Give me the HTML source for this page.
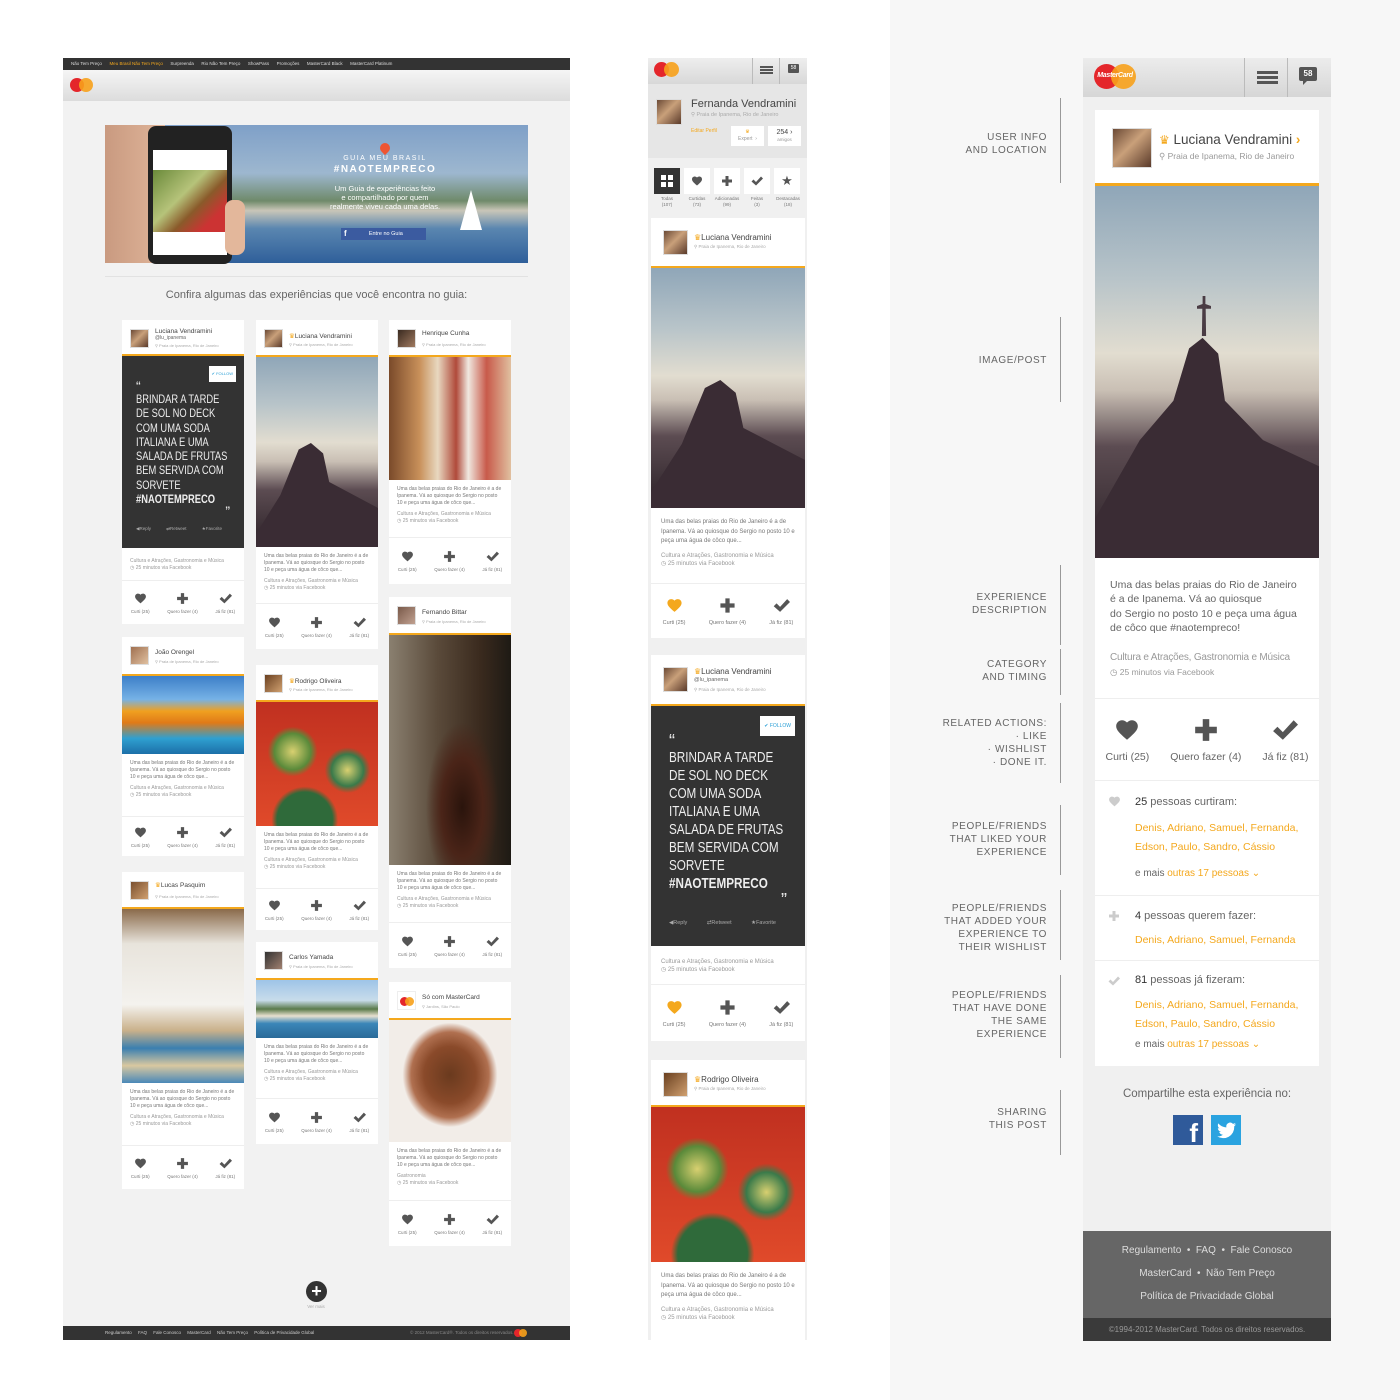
<!DOCTYPE html>
<html><head><meta charset="utf-8">
<style>
*{margin:0;padding:0;box-sizing:border-box}
body{width:1400px;height:1400px;position:relative;background:#fff;font-family:"Liberation Sans",sans-serif;overflow:hidden;color:#555}
.a{position:absolute}
.card{position:absolute;background:#fff;display:flex;flex-direction:column;overflow:hidden}
.ol{background:#f4a81d;flex:none}
.av{position:absolute;background:linear-gradient(135deg,#6b4a36,#c9a07a 45%,#5a3a2a);border:1px solid #ddd}
.nm{position:absolute;color:#444;white-space:nowrap}
.lc{position:absolute;color:#aaa;white-space:nowrap}
.crown{color:#f4a81d}
.txt{color:#777;flex:none;position:relative;overflow:hidden}
.act{flex:none;border-top:1px solid #eee;display:flex;justify-content:space-around;align-items:center;text-align:center;color:#777}
.act div{display:flex;flex-direction:column;align-items:center}
.quote{background:#333;color:#eee;flex:none;position:relative;text-transform:uppercase}
.qi{width:128%;transform:scaleX(.78);transform-origin:left top}
.lbl{position:absolute;text-align:right;color:#666;font-size:10px;letter-spacing:.6px;line-height:13px;white-space:nowrap}
.vl{position:absolute;width:1px;background:#999;left:1060px}
.or{color:#f4a81d}
.christ{background:linear-gradient(#8fa6b8 0%,#b8c4c9 25%,#e2ddd0 45%,#c9bfb4 55%,#5c4c52 70%,#2a2026 100%);position:relative}
</style></head><body>
<svg width="0" height="0" style="position:absolute">
<defs>
<symbol id="h" viewBox="0 0 24 24"><path d="M12 21l-1.5-1.3C5.4 15.1 2 12.1 2 8.4 2 5.4 4.4 3 7.4 3c1.7 0 3.4.8 4.6 2.1C13.2 3.8 14.9 3 16.6 3 19.6 3 22 5.4 22 8.4c0 3.7-3.4 6.7-8.5 11.3z"/></symbol>
<symbol id="p" viewBox="0 0 24 24"><path d="M9 2h6v7h7v6h-7v7H9v-7H2V9h7z"/></symbol>
<symbol id="c" viewBox="0 0 24 24"><path d="M1 13l4-4 5 5L20 3l4 4-14 14z"/></symbol>
</defs></svg>

<div class="a" style="left:890px;top:0;width:510px;height:1400px;background:#f7f7f7"></div>

<!-- ================= DESKTOP ================= -->
<div class="a" style="left:63px;top:58px;width:507px;height:1282px;background:#f2f2f2"></div>
<div class="a" style="left:63px;top:58px;width:507px;height:12px;background:#333;font-size:4.5px;color:#ddd;line-height:12px;padding-left:8px;white-space:nowrap">Não Tem Preço &nbsp;&nbsp;&nbsp;&nbsp; <span class="or">Meu Brasil Não Tem Preço</span> &nbsp;&nbsp;&nbsp;&nbsp; Surpreenda &nbsp;&nbsp;&nbsp;&nbsp; Rio Não Tem Preço &nbsp;&nbsp;&nbsp;&nbsp; ShowPass &nbsp;&nbsp;&nbsp;&nbsp; Promoções &nbsp;&nbsp;&nbsp;&nbsp; MasterCard Black &nbsp;&nbsp;&nbsp;&nbsp; MasterCard Platinum</div>
<div class="a" style="left:63px;top:70px;width:507px;height:31px;background:linear-gradient(#f5f5f5,#dcdcdc)"></div>
<div class="a" style="left:70px;top:78px;width:14px;height:14px;border-radius:50%;background:#e4262b"></div>
<div class="a" style="left:79px;top:78px;width:14px;height:14px;border-radius:50%;background:#f7a11b;opacity:.9"></div>
<!-- banner -->
<div class="a" style="left:105px;top:125px;width:423px;height:138px;background:linear-gradient(#7fa0c8 0%,#9db7cf 35%,#6f8a6a 55%,#c9c6b8 62%,#5a86b0 75%,#2f5f9a 100%)"></div>
<div class="a" style="left:105px;top:125px;width:60px;height:138px;background:linear-gradient(90deg,#c99a80,#e0b59a)"></div>
<div class="a" style="left:148px;top:126px;width:84px;height:138px;background:#222;border-radius:8px"></div>
<div class="a" style="left:153px;top:150px;width:74px;height:105px;background:#fff"></div>
<div class="a" style="left:153px;top:170px;width:74px;height:62px;background:linear-gradient(135deg,#6a8a3a,#b6c37a 40%,#8a5a2a 60%,#c33 80%)"></div>
<div class="a" style="left:225px;top:200px;width:20px;height:55px;background:#e3b79b;border-radius:8px"></div>
<div class="a" style="left:380px;top:143px;width:10px;height:10px;background:#e53;border-radius:50% 50% 0 50%;transform:rotate(45deg)"></div>
<div class="a" style="left:300px;top:155px;width:170px;text-align:center;color:#fff;font-size:7px;letter-spacing:1.5px">GUIA MEU BRASIL</div>
<div class="a" style="left:300px;top:164px;width:170px;text-align:center;color:#fff;font-size:10px;font-weight:bold;letter-spacing:1.5px">#NAOTEMPRECO</div>
<div class="a" style="left:300px;top:184px;width:170px;text-align:center;color:#fff;font-size:7.5px;line-height:9px">Um Guia de experiências feito<br>e compartilhado por quem<br>realmente viveu cada uma delas.</div>
<div class="a" style="left:341px;top:228px;width:85px;height:12px;background:#3b5ba0;color:#fff;font-size:5.5px;line-height:12px;text-align:center">&nbsp;&nbsp;&nbsp;Entre no Guia</div>
<div class="a" style="left:344px;top:228px;color:#fff;font-size:8px;font-weight:bold;line-height:12px">f</div>
<div class="a" style="left:460px;top:190px;width:22px;height:40px;background:#fff;clip-path:polygon(50% 0,100% 100%,0 100%)"></div>
<div class="a" style="left:105px;top:276px;width:423px;height:1px;background:#e2e2e2"></div>
<div class="a" style="left:63px;top:289px;width:507px;text-align:center;font-size:11px;color:#666">Confira algumas das experiências que você encontra no guia:</div>

<style>
.dc{width:122px}
.dc .hd{height:34px;position:relative;flex:none}
.dc .av{left:8px;top:9px;width:19px;height:19px}
.dc .nm{left:33px;top:9px;font-size:6.5px}
.dc .lc{left:33px;top:22px;font-size:4px}
.dc .ol{height:2px}
.dc .txt{font-size:5px;line-height:7px;padding:6px 8px}
.dc .txt .g{color:#999;margin-top:4px}
.dc .act{font-size:4.5px}
.dc .act svg{width:13px;height:13px;fill:#555;margin-bottom:4px}
</style>

<div class="card dc" style="left:122px;top:320px">
<div class="hd"><div class="av"></div><div class="nm" style="top:8px">Luciana Vendramini</div><div class="lc" style="top:15px;font-size:5px;color:#666">@lu_ipanema</div><div class="lc" style="top:23px">⚲ Praia de Ipanema, Rio de Janeiro</div></div>
<div class="ol"></div>
<div class="quote" style="height:192px;padding:20px 14px;font-size:12px;line-height:14.3px">
<div class="a" style="right:8px;top:10px;background:#fff;color:#2a9fd6;font-size:4px;padding:1px 3px">✔ Follow</div>
<div style="font-size:14px;line-height:12px;margin-top:4px">“</div><div class="qi">BRINDAR A TARDE<br>DE SOL NO DECK<br>COM UMA SODA<br>ITALIANA E UMA<br>SALADA DE FRUTAS<br>BEM SERVIDA COM<br>SORVETE<br><b>#NAOTEMPRECO</b></div><div style="text-align:right;font-size:14px;line-height:10px">”</div>
<div class="a" style="left:14px;bottom:12px;font-size:4.5px;color:#aaa;text-transform:none;word-spacing:14px">◀Reply ⇄Retweet ★Favorite</div>
</div>
<div class="txt" style="height:32px;padding-top:10px"><div class="g" style="margin:0">Cultura e Atrações, Gastronomia e Música<br>◷ 25 minutos via Facebook</div></div>
<div class="act" style="height:44px"><div><svg><use href="#h"/></svg>Curti (25)</div><div><svg><use href="#p"/></svg>Quero fazer (4)</div><div><svg><use href="#c"/></svg>Já fiz (81)</div></div>
</div>

<div class="card dc" style="left:122px;top:637px">
<div class="hd" style="height:37px"><div class="av" style="background:linear-gradient(135deg,#a07050,#e0c0a0)"></div><div class="nm" style="top:12px">João Orengel</div><div class="lc">⚲ Praia de Ipanema, Rio de Janeiro</div></div>
<div class="ol"></div>
<div style="height:78px;flex:none;background:linear-gradient(#3d7fc8 0%,#76b2e6 30%,#f0a020 45%,#e07a18 60%,#2fa0d0 80%,#1c6fa8 100%)"></div>
<div class="txt" style="height:62px">Uma das belas praias do Rio de Janeiro é a de Ipanema. Vá ao quiosque do Sergio no posto 10 e peça uma água de côco que...<div class="g">Cultura e Atrações, Gastronomia e Música<br>◷ 25 minutos via Facebook</div></div>
<div class="act" style="height:40px"><div><svg><use href="#h"/></svg>Curti (25)</div><div><svg><use href="#p"/></svg>Quero fazer (4)</div><div><svg><use href="#c"/></svg>Já fiz (81)</div></div>
</div>

<div class="card dc" style="left:122px;top:872px">
<div class="hd" style="height:35px"><div class="av" style="background:linear-gradient(135deg,#7a5030,#d0a070)"></div><div class="nm"><span class="crown">♛</span>Lucas Pasquim</div><div class="lc">⚲ Praia de Ipanema, Rio de Janeiro</div></div>
<div class="ol"></div>
<div style="height:174px;flex:none;background:linear-gradient(#8a6a4a 0%,#e8e4dc 20%,#f4f2ee 55%,#c9b08a 70%,#3a7fb0 80%,#d9c8a0 90%,#4a88b8 100%)"></div>
<div class="txt" style="height:62px">Uma das belas praias do Rio de Janeiro é a de Ipanema. Vá ao quiosque do Sergio no posto 10 e peça uma água de côco que...<div class="g">Cultura e Atrações, Gastronomia e Música<br>◷ 25 minutos via Facebook</div></div>
<div class="act" style="height:44px"><div><svg><use href="#h"/></svg>Curti (25)</div><div><svg><use href="#p"/></svg>Quero fazer (4)</div><div><svg><use href="#c"/></svg>Já fiz (81)</div></div>
</div>

<div class="card dc" style="left:256px;top:320px">
<div class="hd" style="height:35px"><div class="av"></div><div class="nm" style="top:12px"><span class="crown">♛</span>Luciana Vendramini</div><div class="lc">⚲ Praia de Ipanema, Rio de Janeiro</div></div>
<div class="ol"></div>
<div class="christ" style="height:190px;flex:none"><div class="a" style="left:0;top:60px;width:122px;height:130px;background:#3a2c34;clip-path:polygon(35% 25%,45% 20%,55% 28%,60% 50%,80% 60%,100% 70%,100% 100%,0 100%,0 90%,20% 60%)"></div></div>
<div class="txt" style="height:56px">Uma das belas praias do Rio de Janeiro é a de Ipanema. Vá ao quiosque do Sergio no posto 10 e peça uma água de côco que...<div class="g">Cultura e Atrações, Gastronomia e Música<br>◷ 25 minutos via Facebook</div></div>
<div class="act" style="height:46px"><div><svg><use href="#h"/></svg>Curti (25)</div><div><svg><use href="#p"/></svg>Quero fazer (4)</div><div><svg><use href="#c"/></svg>Já fiz (81)</div></div>
</div>

<div class="card dc" style="left:256px;top:665px">
<div class="hd" style="height:35px"><div class="av" style="background:linear-gradient(135deg,#6a4020,#d0a070)"></div><div class="nm" style="top:12px"><span class="crown">♛</span>Rodrigo Oliveira</div><div class="lc">⚲ Praia de Ipanema, Rio de Janeiro</div></div>
<div class="ol"></div>
<div style="height:124px;flex:none;background:radial-gradient(circle at 30% 40%,#d8d070 0,#5a8a3a 16%,transparent 22%),radial-gradient(circle at 75% 55%,#d8d070 0,#3a7a4a 14%,transparent 20%),radial-gradient(circle at 40% 95%,#2f6a3a 0,#2f6a3a 20%,transparent 24%),linear-gradient(#c03020,#e04a2a)"></div>
<div class="txt" style="height:62px">Uma das belas praias do Rio de Janeiro é a de Ipanema. Vá ao quiosque do Sergio no posto 10 e peça uma água de côco que...<div class="g">Cultura e Atrações, Gastronomia e Música<br>◷ 25 minutos via Facebook</div></div>
<div class="act" style="height:42px"><div><svg><use href="#h"/></svg>Curti (25)</div><div><svg><use href="#p"/></svg>Quero fazer (4)</div><div><svg><use href="#c"/></svg>Já fiz (81)</div></div>
</div>

<div class="card dc" style="left:256px;top:942px">
<div class="hd" style="height:36px"><div class="av" style="background:linear-gradient(135deg,#333,#a08070)"></div><div class="nm" style="top:12px">Carlos Yamada</div><div class="lc">⚲ Praia de Ipanema, Rio de Janeiro</div></div>
<div class="ol"></div>
<div style="height:58px;flex:none;background:linear-gradient(#9ec4e8 0%,#c8dcea 35%,#5a7a4a 50%,#e8e0d0 62%,#3a86b8 75%,#2a6a98 100%)"></div>
<div class="txt" style="height:60px">Uma das belas praias do Rio de Janeiro é a de Ipanema. Vá ao quiosque do Sergio no posto 10 e peça uma água de côco que...<div class="g">Cultura e Atrações, Gastronomia e Música<br>◷ 25 minutos via Facebook</div></div>
<div class="act" style="height:46px"><div><svg><use href="#h"/></svg>Curti (25)</div><div><svg><use href="#p"/></svg>Quero fazer (4)</div><div><svg><use href="#c"/></svg>Já fiz (81)</div></div>
</div>

<div class="card dc" style="left:389px;top:320px">
<div class="hd" style="height:35px"><div class="av" style="background:linear-gradient(135deg,#3a2a20,#a07a60)"></div><div class="nm" style="top:10px">Henrique Cunha</div><div class="lc">⚲ Praia de Ipanema, Rio de Janeiro</div></div>
<div class="ol"></div>
<div style="height:123px;flex:none;background:linear-gradient(90deg,#7a4a2a 0%,#c8905a 25%,#e8d8c0 40%,#b04a3a 55%,#f0e8e0 65%,#c85a4a 80%,#e0c0a0 100%)"></div>
<div class="txt" style="height:57px">Uma das belas praias do Rio de Janeiro é a de Ipanema. Vá ao quiosque do Sergio no posto 10 e peça uma água de côco que...<div class="g">Cultura e Atrações, Gastronomia e Música<br>◷ 25 minutos via Facebook</div></div>
<div class="act" style="height:47px"><div><svg><use href="#h"/></svg>Curti (25)</div><div><svg><use href="#p"/></svg>Quero fazer (4)</div><div><svg><use href="#c"/></svg>Já fiz (81)</div></div>
</div>

<div class="card dc" style="left:389px;top:597px">
<div class="hd" style="height:36px"><div class="av" style="background:linear-gradient(135deg,#7a5a4a,#c0a090)"></div><div class="nm" style="top:12px">Fernando Bittar</div><div class="lc">⚲ Praia de Ipanema, Rio de Janeiro</div></div>
<div class="ol"></div>
<div style="height:230px;flex:none;background:radial-gradient(ellipse at 60% 75%,#2a140c 0,#4a2418 20%,transparent 35%),linear-gradient(90deg,#8a8070 0%,#5a4a3a 40%,#3a2a1e 75%,#1e1a14 100%)"></div>
<div class="txt" style="height:57px">Uma das belas praias do Rio de Janeiro é a de Ipanema. Vá ao quiosque do Sergio no posto 10 e peça uma água de côco que...<div class="g">Cultura e Atrações, Gastronomia e Música<br>◷ 25 minutos via Facebook</div></div>
<div class="act" style="height:46px"><div><svg><use href="#h"/></svg>Curti (25)</div><div><svg><use href="#p"/></svg>Quero fazer (4)</div><div><svg><use href="#c"/></svg>Já fiz (81)</div></div>
</div>

<div class="card dc" style="left:389px;top:982px">
<div class="hd" style="height:36px"><div class="av" style="background:#fff;border:1px solid #eee"><div class="a" style="left:2px;top:5px;width:9px;height:9px;border-radius:50%;background:#e4262b"></div><div class="a" style="left:7px;top:5px;width:9px;height:9px;border-radius:50%;background:#f7a11b;opacity:.9"></div></div><div class="nm" style="top:12px">Só com MasterCard</div><div class="lc">⚲ Jardins, São Paulo</div></div>
<div class="ol"></div>
<div style="height:122px;flex:none;background:radial-gradient(ellipse at 50% 45%,#6a3a1e 0,#8a4a2a 30%,#b07050 45%,#f2ede8 55%),#eee"></div>
<div class="txt" style="height:58px">Uma das belas praias do Rio de Janeiro é a de Ipanema. Vá ao quiosque do Sergio no posto 10 e peça uma água de côco que...<div class="g">Gastronomia<br>◷ 25 minutos via Facebook</div></div>
<div class="act" style="height:46px"><div><svg><use href="#h"/></svg>Curti (25)</div><div><svg><use href="#p"/></svg>Quero fazer (4)</div><div><svg><use href="#c"/></svg>Já fiz (81)</div></div>
</div>

<div class="a" style="left:306px;top:1281px;width:21px;height:21px;border-radius:50%;background:#333;color:#fff;text-align:center;font-size:18px;line-height:20px;font-weight:bold">+</div>
<div class="a" style="left:296px;top:1304px;width:40px;text-align:center;font-size:4.5px;color:#aaa">Ver mais</div>
<div class="a" style="left:63px;top:1326px;width:507px;height:14px;background:#333;font-size:4.5px;color:#ccc;line-height:14px;padding-left:42px;white-space:nowrap">Regulamento &nbsp;&nbsp;&nbsp; FAQ &nbsp;&nbsp;&nbsp; Fale Conosco &nbsp;&nbsp;&nbsp; MasterCard &nbsp;&nbsp;&nbsp; Não Tem Preço &nbsp;&nbsp;&nbsp; Política de Privacidade Global<span style="position:absolute;left:347px;color:#888">© 2012 MasterCard®. Todos os direitos reservados.</span></div>
<div class="a" style="left:514px;top:1329px;width:8px;height:8px;border-radius:50%;background:#e4262b"></div>
<div class="a" style="left:519px;top:1329px;width:8px;height:8px;border-radius:50%;background:#f7a11b;opacity:.9"></div>

<!-- ================= MOBILE ================= -->
<div class="a" style="left:648px;top:58px;width:159px;height:1282px;background:#f0f0f0"></div>
<div class="a" style="left:648px;top:58px;width:159px;height:26px;background:linear-gradient(#eee,#d8d8d8)"></div>
<div class="a" style="left:654px;top:62px;width:15px;height:15px;border-radius:50%;background:#e4262b"></div>
<div class="a" style="left:664px;top:62px;width:15px;height:15px;border-radius:50%;background:#f7a11b;opacity:.9"></div>
<div class="a" style="left:752px;top:58px;width:1px;height:26px;background:#bbb"></div>
<div class="a" style="left:779px;top:58px;width:1px;height:26px;background:#bbb"></div>
<div class="a" style="left:760px;top:66px;width:13px;height:2px;background:#555;box-shadow:0 3px 0 #555,0 6px 0 #555"></div>
<div class="a" style="left:788px;top:64px;width:11px;height:9px;background:#555;border-radius:1px;color:#fff;font-size:5px;text-align:center;line-height:9px">58</div>
<div class="a" style="left:648px;top:84px;width:159px;height:74px;background:#e6e6e6"></div>
<div class="av" style="left:656px;top:99px;width:26px;height:26px"></div>
<div class="nm" style="left:691px;top:98px;font-size:11px">Fernanda Vendramini</div>
<div class="lc" style="left:691px;top:112px;font-size:5.5px">⚲ Praia de Ipanema, Rio de Janeiro</div>
<div class="lc" style="left:691px;top:128px;font-size:5px;color:#f4a81d">Editar Perfil</div>
<div class="a" style="left:731px;top:126px;width:33px;height:20px;background:#fff;font-size:5px;color:#999;text-align:center;line-height:7px;padding-top:3px"><span class="crown">♛</span><br>Expert &nbsp;›</div>
<div class="a" style="left:768px;top:126px;width:33px;height:20px;background:#fff;font-size:7px;color:#444;text-align:center;line-height:7px;padding-top:3px">254 ›<br><span style="font-size:4.5px;color:#999">amigos</span></div>
<div class="a" style="left:654px;top:168px;width:26px;height:26px;background:#333"></div>
<div class="a" style="left:661px;top:175px;width:12px;height:12px;background:linear-gradient(90deg,transparent 5px,#333 5px,#333 7px,transparent 7px),linear-gradient(transparent 5px,#333 5px,#333 7px,transparent 7px),#fff"></div>
<div class="a" style="left:684px;top:168px;width:26px;height:26px;background:#fff"><svg class="a" style="left:7px;top:7px;fill:#555" width="12" height="12"><use href="#h"/></svg></div>
<div class="a" style="left:714px;top:168px;width:26px;height:26px;background:#fff"><svg class="a" style="left:7px;top:7px;fill:#555" width="12" height="12"><use href="#p"/></svg></div>
<div class="a" style="left:744px;top:168px;width:26px;height:26px;background:#fff"><svg class="a" style="left:7px;top:7px;fill:#555" width="12" height="12"><use href="#c"/></svg></div>
<div class="a" style="left:774px;top:168px;width:26px;height:26px;background:#fff;color:#555;text-align:center;font-size:13px;line-height:26px">★</div>
<div class="a" style="left:648px;top:196px;width:159px;font-size:4.5px;color:#777;line-height:5.5px;white-space:nowrap">
<span class="a" style="left:6px;width:26px;text-align:center">Todas<br>(107)</span><span class="a" style="left:36px;width:26px;text-align:center">Curtidas<br>(73)</span><span class="a" style="left:63px;width:32px;text-align:center">Adicionadas<br>(99)</span><span class="a" style="left:96px;width:26px;text-align:center">Feitas<br>(3)</span><span class="a" style="left:124px;width:32px;text-align:center">Destacadas<br>(18)</span></div>

<style>
.mc{width:154px;left:651px}
.mc .hd{position:relative;flex:none}
.mc .av{left:12px;top:12px;width:25px;height:25px}
.mc .nm{left:43px;top:15px;font-size:8px}
.mc .lc{left:43px;top:26px;font-size:4.5px}
.mc .ol{height:2px}
.mc .txt{font-size:6px;line-height:9.5px;padding:10px 10px}
.mc .txt .g{color:#999;margin-top:5px;line-height:8px}
.mc .act{font-size:5.5px}
.mc .act svg{width:17px;height:17px;fill:#555;margin-bottom:6px}
</style>

<div class="card mc" style="top:218px">
<div class="hd" style="height:48px"><div class="av"></div><div class="nm"><span class="crown">♛</span>Luciana Vendramini</div><div class="lc">⚲ Praia de Ipanema, Rio de Janeiro</div></div>
<div class="ol"></div>
<div class="christ" style="height:240px;flex:none"><div class="a" style="left:0;top:80px;width:154px;height:160px;background:#3a2c34;clip-path:polygon(35% 25%,45% 20%,55% 28%,60% 50%,80% 60%,100% 70%,100% 100%,0 100%,0 90%,20% 60%)"></div></div>
<div class="txt" style="height:75px">Uma das belas praias do Rio de Janeiro é a de Ipanema. Vá ao quiosque do Sergio no posto 10 e peça uma água de côco que...<div class="g">Cultura e Atrações, Gastronomia e Música<br>◷ 25 minutos via Facebook</div></div>
<div class="act" style="height:55px"><div><svg style="fill:#f4a81d"><use href="#h"/></svg>Curti (25)</div><div><svg><use href="#p"/></svg>Quero fazer (4)</div><div><svg><use href="#c"/></svg>Já fiz (81)</div></div>
</div>

<div class="card mc" style="top:655px">
<div class="hd" style="height:49px"><div class="av"></div><div class="nm" style="top:12px"><span class="crown">♛</span>Luciana Vendramini</div><div class="lc" style="top:22px;font-size:5.5px;color:#666">@lu_ipanema</div><div class="lc" style="top:32px">⚲ Praia de Ipanema, Rio de Janeiro</div></div>
<div class="ol"></div>
<div class="quote" style="height:240px;padding:24px 18px;font-size:15px;line-height:18px">
<div class="a" style="right:10px;top:10px;background:#fff;color:#2a9fd6;font-size:5px;padding:1px 4px">✔ Follow</div>
<div style="font-size:18px;line-height:15px;margin-top:4px">“</div><div class="qi">BRINDAR A TARDE<br>DE SOL NO DECK<br>COM UMA SODA<br>ITALIANA E UMA<br>SALADA DE FRUTAS<br>BEM SERVIDA COM<br>SORVETE<br><b>#NAOTEMPRECO</b></div><div style="text-align:right;font-size:18px;line-height:14px">”</div>
<div class="a" style="left:18px;bottom:14px;font-size:5.5px;color:#aaa;text-transform:none;word-spacing:18px">◀Reply ⇄Retweet ★Favorite</div>
</div>
<div class="txt" style="height:38px;padding-top:12px"><div class="g" style="margin:0">Cultura e Atrações, Gastronomia e Música<br>◷ 25 minutos via Facebook</div></div>
<div class="act" style="height:57px"><div><svg style="fill:#f4a81d"><use href="#h"/></svg>Curti (25)</div><div><svg><use href="#p"/></svg>Quero fazer (4)</div><div><svg><use href="#c"/></svg>Já fiz (81)</div></div>
</div>

<div class="card mc" style="top:1060px">
<div class="hd" style="height:45px"><div class="av" style="background:linear-gradient(135deg,#6a4020,#d0a070)"></div><div class="nm"><span class="crown">♛</span>Rodrigo Oliveira</div><div class="lc">⚲ Praia de Ipanema, Rio de Janeiro</div></div>
<div class="ol"></div>
<div style="height:155px;flex:none;background:radial-gradient(circle at 30% 40%,#d8d070 0,#5a8a3a 16%,transparent 22%),radial-gradient(circle at 75% 55%,#d8d070 0,#3a7a4a 14%,transparent 20%),radial-gradient(circle at 40% 95%,#2f6a3a 0,#2f6a3a 20%,transparent 24%),linear-gradient(#c03020,#e04a2a)"></div>
<div class="txt" style="height:78px">Uma das belas praias do Rio de Janeiro é a de Ipanema. Vá ao quiosque do Sergio no posto 10 e peça uma água de côco que...<div class="g">Cultura e Atrações, Gastronomia e Música<br>◷ 25 minutos via Facebook</div></div>
</div>

<!-- ================= ANNOTATIONS ================= -->
<div class="vl" style="top:98px;height:85px"></div>
<div class="lbl" style="right:353px;top:131px">USER INFO<br>AND LOCATION</div>
<div class="vl" style="top:317px;height:85px"></div>
<div class="lbl" style="right:353px;top:354px">IMAGE/POST</div>
<div class="vl" style="top:565px;height:80px"></div>
<div class="lbl" style="right:353px;top:591px">EXPERIENCE<br>DESCRIPTION</div>
<div class="vl" style="top:649px;height:46px"></div>
<div class="lbl" style="right:353px;top:658px">CATEGORY<br>AND TIMING</div>
<div class="vl" style="top:703px;height:80px"></div>
<div class="lbl" style="right:353px;top:717px">RELATED ACTIONS:<br>· LIKE<br>· WISHLIST<br>· DONE IT.</div>
<div class="vl" style="top:805px;height:70px"></div>
<div class="lbl" style="right:353px;top:820px">PEOPLE/FRIENDS<br>THAT LIKED YOUR<br>EXPERIENCE</div>
<div class="vl" style="top:890px;height:70px"></div>
<div class="lbl" style="right:353px;top:902px">PEOPLE/FRIENDS<br>THAT ADDED YOUR<br>EXPERIENCE TO<br>THEIR WISHLIST</div>
<div class="vl" style="top:975px;height:83px"></div>
<div class="lbl" style="right:353px;top:989px">PEOPLE/FRIENDS<br>THAT HAVE DONE<br>THE SAME<br>EXPERIENCE</div>
<div class="vl" style="top:1090px;height:65px"></div>
<div class="lbl" style="right:353px;top:1106px">SHARING<br>THIS POST</div>

<!-- ================= RIGHT DETAIL ================= -->
<div class="a" style="left:1083px;top:58px;width:248px;height:1283px;background:#f0f0f0"></div>
<div class="a" style="left:1083px;top:58px;width:248px;height:39px;background:linear-gradient(#ececec,#d6d6d6)"></div>
<div class="a" style="left:1094px;top:64px;width:25px;height:25px;border-radius:50%;background:#e4262b"></div>
<div class="a" style="left:1111px;top:64px;width:25px;height:25px;border-radius:50%;background:#f7a11b;opacity:.9"></div>
<div class="a" style="left:1094px;top:72px;width:42px;text-align:center;color:#fff;font-size:7px;font-style:italic;font-weight:bold;letter-spacing:-.3px">MasterCard</div>
<div class="a" style="left:1244px;top:58px;width:1px;height:39px;background:#bbb"></div>
<div class="a" style="left:1287px;top:58px;width:1px;height:39px;background:#bbb"></div>
<div class="a" style="left:1257px;top:71px;width:21px;height:3px;background:#555;box-shadow:0 5px 0 #555,0 10px 0 #555"></div>
<div class="a" style="left:1299px;top:67px;width:18px;height:14px;background:#555;border-radius:2px;color:#fff;font-size:8px;font-weight:bold;text-align:center;line-height:14px">58</div>
<div class="a" style="left:1303px;top:80px;width:5px;height:5px;background:#555;clip-path:polygon(0 0,100% 0,0 100%)"></div>

<div class="card" style="left:1095px;top:110px;width:224px">
<div style="height:73px;position:relative;flex:none">
<div class="av" style="left:17px;top:18px;width:40px;height:40px"></div>
<div class="nm" style="left:64px;top:22px;font-size:13.5px"><span class="crown" style="font-size:12px">♛</span> Luciana Vendramini <span class="crown" style="font-weight:bold">›</span></div>
<div class="lc" style="left:64px;top:41px;font-size:8.5px;color:#999">⚲ Praia de Ipanema, Rio de Janeiro</div>
</div>
<div class="ol" style="height:3px"></div>
<div class="christ" style="height:372px;flex:none"><div class="a" style="left:0;top:110px;width:224px;height:262px;background:#3a2c34;clip-path:polygon(42% 20%,48% 16%,55% 22%,58% 40%,75% 55%,100% 65%,100% 100%,0 100%,0 85%,20% 55%,35% 40%)"></div><div class="a" style="left:102px;top:110px;width:14px;height:40px;background:#4a3c44;clip-path:polygon(40% 0,60% 0,60% 20%,100% 25%,100% 32%,62% 32%,65% 100%,35% 100%,38% 32%,0 32%,0 25%,40% 20%)"></div></div>
<div style="height:140px;flex:none;padding:20px 15px;font-size:10.5px;line-height:14.3px;color:#666">Uma das belas praias do Rio de Janeiro<br>é a de Ipanema. Vá ao quiosque<br>do Sergio no posto 10 e peça uma água<br>de côco que #naotempreco!<div style="color:#999;margin-top:16px;font-size:10px;letter-spacing:-.2px;white-space:nowrap">Cultura e Atrações, Gastronomia e Música</div><div style="color:#999;font-size:8.5px">◷ 25 minutos via Facebook</div></div>
<div class="act" style="height:82px;font-size:10.5px;color:#666"><div><svg width="26" height="26" style="fill:#555;margin-bottom:8px"><use href="#h"/></svg>Curti (25)</div><div><svg width="26" height="26" style="fill:#555;margin-bottom:8px"><use href="#p"/></svg>Quero fazer (4)</div><div><svg width="26" height="26" style="fill:#555;margin-bottom:8px"><use href="#c"/></svg>Já fiz (81)</div></div>
<div style="height:115px;flex:none;border-top:1px solid #eee;position:relative;font-size:11px;color:#666">
<svg class="a" style="left:13px;top:14px;fill:#ccc" width="13" height="13"><use href="#h"/></svg>
<div class="a" style="left:40px;top:15px"><span style="color:#333">25</span> pessoas curtiram:</div>
<div class="a or" style="left:40px;top:38px;font-size:10.5px;line-height:19px">Denis, Adriano, Samuel, Fernanda,<br>Edson, Paulo, Sandro, Cássio</div>
<div class="a" style="left:40px;top:87px;font-size:10px">e mais <span class="or">outras 17 pessoas ⌄</span></div>
</div>
<div style="height:65px;flex:none;border-top:1px solid #eee;position:relative;font-size:11px;color:#666">
<svg class="a" style="left:13px;top:14px;fill:#ccc" width="12" height="12"><use href="#p"/></svg>
<div class="a" style="left:40px;top:14px"><span style="color:#333">4</span> pessoas querem fazer:</div>
<div class="a or" style="left:40px;top:38px;font-size:10.5px">Denis, Adriano, Samuel, Fernanda</div>
</div>
<div style="height:106px;flex:none;border-top:1px solid #eee;position:relative;font-size:11px;color:#666">
<svg class="a" style="left:13px;top:14px;fill:#ccc" width="12" height="12"><use href="#c"/></svg>
<div class="a" style="left:40px;top:13px"><span style="color:#333">81</span> pessoas já fizeram:</div>
<div class="a or" style="left:40px;top:35px;font-size:10.5px;line-height:19px">Denis, Adriano, Samuel, Fernanda,<br>Edson, Paulo, Sandro, Cássio</div>
<div class="a" style="left:40px;top:78px;font-size:10px">e mais <span class="or">outras 17 pessoas ⌄</span></div>
</div>
</div>

<div class="a" style="left:1083px;top:1088px;width:248px;text-align:center;font-size:11.5px;color:#666">Compartilhe esta experiência no:</div>
<div class="a" style="left:1173px;top:1115px;width:30px;height:30px;background:#2f5a9a;color:#fff;font-size:26px;font-weight:bold;text-align:right;padding-right:5px;line-height:36px;overflow:hidden">f</div>
<div class="a" style="left:1211px;top:1115px;width:30px;height:30px;background:#2aa3e0"><svg width="30" height="30" viewBox="0 0 24 24"><path fill="#fff" d="M20 7.5c-.6.3-1.2.4-1.8.5.7-.4 1.1-1 1.4-1.7-.6.4-1.3.6-2 .8a3.1 3.1 0 0 0-5.3 2.8C9.7 9.8 7.4 8.6 5.9 6.7c-.8 1.4-.4 3.2 1 4.1-.5 0-1-.2-1.4-.4 0 1.5 1.1 2.8 2.5 3.1-.5.1-.9.2-1.4.1.4 1.3 1.6 2.1 2.9 2.2A6.3 6.3 0 0 1 5 17.1 8.8 8.8 0 0 0 18.6 9.3V8.9c.6-.4 1.1-.9 1.4-1.4z"/></svg></div>

<div class="a" style="left:1083px;top:1231px;width:248px;height:87px;background:#666;color:#ddd;font-size:10px;text-align:center;line-height:23px;padding-top:8px">Regulamento &nbsp;•&nbsp; FAQ &nbsp;•&nbsp; Fale Conosco<br>MasterCard &nbsp;•&nbsp; Não Tem Preço<br>Política de Privacidade Global</div>
<div class="a" style="left:1083px;top:1318px;width:248px;height:23px;background:#3a3a3a;color:#999;font-size:8px;text-align:center;line-height:23px">©1994-2012 MasterCard. Todos os direitos reservados.</div>
</body></html>
